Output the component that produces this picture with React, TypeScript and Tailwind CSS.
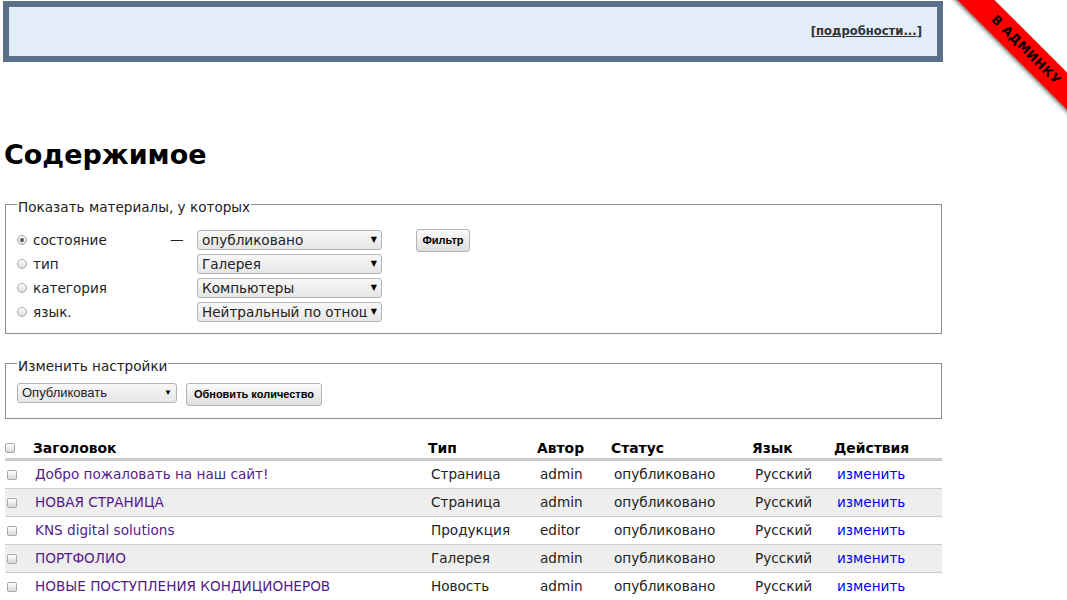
import React from "react";

const rows = [
  { title: "Добро пожаловать на наш сайт!", type: "Страница", author: "admin" },
  { title: "НОВАЯ СТРАНИЦА", type: "Страница", author: "admin" },
  { title: "KNS digital solutions", type: "Продукция", author: "editor" },
  { title: "ПОРТФОЛИО", type: "Галерея", author: "admin" },
  { title: "НОВЫЕ ПОСТУПЛЕНИЯ КОНДИЦИОНЕРОВ", type: "Новость", author: "admin" },
];

const filters = [
  { label: "состояние", value: "опубликовано", checked: true },
  { label: "тип", value: "Галерея" },
  { label: "категория", value: "Компьютеры" },
  { label: "язык.", value: "Нейтральный по отнош" },
];

const Radio = ({ checked }: { checked?: boolean }) => (
  <span className="w-[10px] h-[10px] rounded-full border border-[#a8a8a8] bg-gradient-to-b from-[#ffffff] to-[#dcdcdc] flex items-center justify-center shrink-0">
    {checked && <span className="w-[4px] h-[4px] rounded-full bg-[#555]" />}
  </span>
);

const Check = () => (
  <span className="block w-[10px] h-[10px] rounded-[2px] border border-[#a8a8a8] bg-gradient-to-b from-[#ffffff] to-[#d8d8d8]" />
);

const Select = ({ value, className }: { value: string; className: string }) => (
  <div
    className={
      "h-[20px] flex items-center border border-[#b4b4b4] rounded-[3px] bg-gradient-to-b from-[#f8f8f8] to-[#e6e6e6] pl-[4px] pr-[4px] overflow-hidden " +
      className
    }
  >
    <span className="flex-1 whitespace-nowrap overflow-hidden">{value}</span>
    <span className="text-[8px] leading-none pl-[4px] text-black">▼</span>
  </div>
);

const Button = ({ children, className }: { children: React.ReactNode; className: string }) => (
  <div
    className={
      "h-[23px] flex items-center justify-center border border-[#b4b4b4] rounded-[3px] bg-gradient-to-b from-[#fbfbfb] to-[#dedede] font-['Liberation_Sans',Arial,sans-serif] font-bold text-[11px] text-black " +
      className
    }
  >
    {children}
  </div>
);

const cols = "grid grid-cols-[25px_395px_109px_74px_141px_82px_111px]";

export default function App() {
  return (
    <div className="relative w-[1067px] h-[600px] overflow-hidden bg-white font-['DejaVu_Sans',sans-serif] text-[13.6px] text-[#222]">
      <div className="w-[940px] ml-[3px] pt-[1px]">
        <div className="h-[61px] border-[6px] border-[#5a7089] bg-[#e3edf8] flex items-center justify-end pr-[15px] pt-[1px]">
          <span className="text-[11.6px] font-bold text-[#333]">
            [<span className="underline">подробности...</span>]
          </span>
        </div>

        <h1 className="mt-[76px] ml-[1px] text-[27px] leading-[33px] font-bold text-black">Содержимое</h1>

        <fieldset className="mt-[23px] ml-[2px] w-[937px] border border-[#8e8e8e] pl-[11px] pt-[15px] pb-[11px]">
          <legend className="px-[1px] pt-[6px] leading-[15px]">Показать материалы, у которых</legend>
          <div className="flex flex-col gap-[4px]">
            {filters.map((f, i) => (
              <div key={f.label} className="flex items-center h-[20px]">
                <div className="w-[150px] flex items-center gap-[6px]">
                  <Radio checked={f.checked} />
                  <span>{f.label}</span>
                </div>
                <div className="w-[30px] pl-[3px]">{i === 0 ? "—" : ""}</div>
                <Select value={f.value} className="w-[185px]" />
                {i === 0 && <Button className="ml-[34px] w-[54px]">Фильтр</Button>}
              </div>
            ))}
          </div>
        </fieldset>

        <fieldset className="mt-[19px] ml-[2px] w-[937px] border border-[#8e8e8e] pl-[11px] pt-[9px] pb-[12px]">
          <legend className="px-[1px] pt-[6px] leading-[15px]">Изменить настройки</legend>
          <div className="flex items-start gap-[9px]">
            <Select value="Опубликовать" className="w-[160px] text-[13px] font-['Liberation_Sans',Arial,sans-serif]" />
            <Button className="w-[136px]">Обновить количество</Button>
          </div>
        </fieldset>

        <div className="mt-[19px] ml-[2px] w-[937px]">
          <div className={cols + " h-[23px] items-center border-b-[3px] border-[#cccccc] font-bold text-[13.9px] text-black"}>
            <Check />
            <span className="pl-[3px]">Заголовок</span>
            <span className="pl-[3px]">Тип</span>
            <span className="pl-[3px]">Автор</span>
            <span className="pl-[3px]">Статус</span>
            <span className="pl-[3px]">Язык</span>
            <span className="pl-[3px]">Действия</span>
          </div>
          {rows.map((r, i) => (
            <div
              key={r.title}
              className={
                cols +
                " h-[28px] items-center border-b border-[#cccccc] " +
                (i % 2 === 1 ? "bg-[#eeeeee]" : "bg-white")
              }
            >
              <span className="pl-[2px]">
                <Check />
              </span>
              <span className="pl-[5px] text-[#551a8b] whitespace-nowrap">{r.title}</span>
              <span className="pl-[6px]">{r.type}</span>
              <span className="pl-[6px]">{r.author}</span>
              <span className="pl-[6px]">опубликовано</span>
              <span className="pl-[6px]">Русский</span>
              <span className="pl-[6px] text-[#0000ee]">изменить</span>
            </div>
          ))}
        </div>
      </div>

      <div className="absolute left-[926px] top-[37px] w-[200px] h-[26px] rotate-45 bg-[#ff0000] shadow-[0_2px_4px_rgba(0,0,0,0.55)] flex items-center justify-center">
        <span className="text-[12.5px] font-bold text-black tracking-[0.5px]">В АДМИНКУ</span>
      </div>
    </div>
  );
}
